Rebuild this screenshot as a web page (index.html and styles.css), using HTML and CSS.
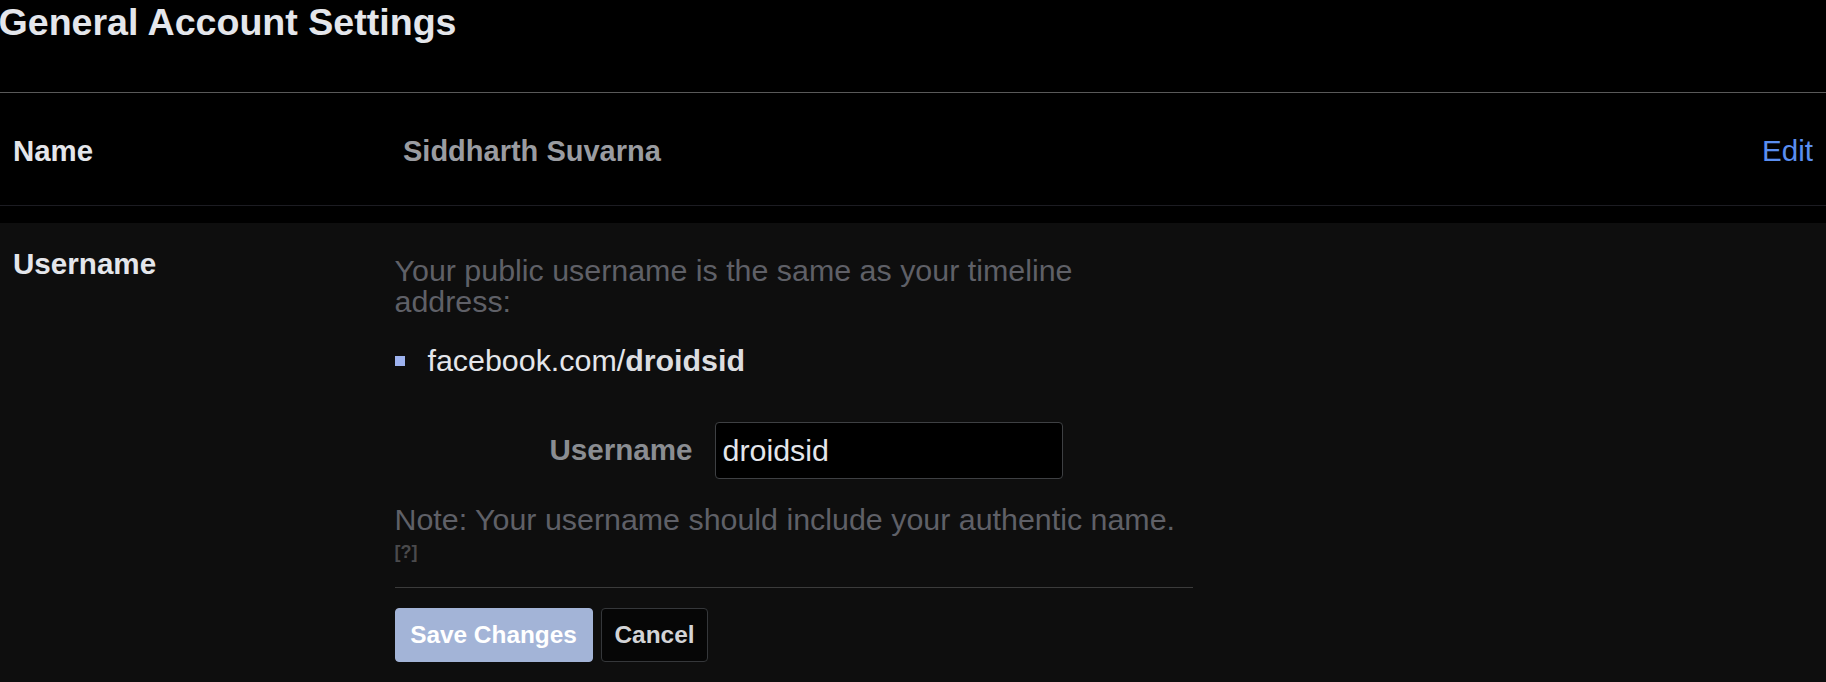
FILE: index.html
```html
<!DOCTYPE html>
<html lang="en">
<head>
<meta charset="utf-8">
<title>General Account Settings</title>
<link rel="stylesheet" href="styles.css">
</head>
<body>
  <header class="page-head">
    <h1 class="page-title">General Account Settings</h1>
  </header>

  <div class="setting-row">
    <div class="setting-label">Name</div>
    <div class="setting-value">Siddharth Suvarna</div>
    <a class="setting-edit" href="#">Edit</a>
  </div>

  <section class="setting-open">
    <div class="open-label">Username</div>
    <div class="open-body">
      <p class="desc">Your public username is the same as your timeline address:</p>
      <ul class="addr-list">
        <li class="addr-item"><span class="bullet"></span><span>facebook.com/<b>droidsid</b></span></li>
      </ul>
      <div class="field-row">
        <label class="field-label" for="uname">Username</label>
        <input id="uname" class="field-input" type="text" value="droidsid">
      </div>
      <p class="note">Note: Your username should include your authentic name.</p>
      <div class="help">[?]</div>
      <div class="actions">
        <button class="btn btn-save" type="button">Save Changes</button>
        <button class="btn btn-cancel" type="button">Cancel</button>
      </div>
    </div>
  </section>
</body>
</html>
```

FILE: styles.css
```css
html, body {
  margin: 0;
  padding: 0;
  background: #000;
}

body {
  font-family: "Liberation Sans", Arial, sans-serif;
  color: #e4e6eb;
  overflow: hidden;
}

.page-head {
  height: 92px;
  border-bottom: 1px solid #595959;
}

.page-title {
  margin: 0 0 0 -1.5px;
  font-size: 37.6px;
  line-height: 44px;
  font-weight: 700;
  color: #e4e6eb;
}

.setting-row {
  display: flex;
  align-items: flex-start;
  height: 113px;
  box-sizing: border-box;
  padding: 41px 13px 0 13px;
  border-bottom: 1px solid #1c1c22;
}

.setting-label {
  width: 390px;
  font-size: 29.4px;
  line-height: 34px;
  font-weight: 700;
  color: #e4e6eb;
}

.setting-value {
  flex: 1;
  font-size: 29px;
  line-height: 34px;
  font-weight: 700;
  color: #9a9ca1;
}

.setting-edit {
  font-size: 29.6px;
  line-height: 34px;
  color: #5a8ef0;
  text-decoration: none;
}

.setting-open {
  margin-top: 17px;
  background: #0e0e0e;
  min-height: 480px;
  display: flex;
  padding: 24px 0 0 13px;
  box-sizing: border-box;
}

.open-label {
  width: 381.5px;
  font-size: 29.6px;
  line-height: 34px;
  font-weight: 700;
  color: #e4e6eb;
}

.open-body {
  width: 798px;
  display: flex;
  flex-direction: column;
}

.desc {
  margin: 8px 0 0;
  width: 740px;
  font-size: 30.4px;
  line-height: 31px;
  color: #5f6067;
}

.addr-list {
  list-style: none;
  margin: 28px 0 0;
  padding: 0;
}

.addr-item {
  display: flex;
  align-items: center;
  gap: 23px;
  font-size: 30.4px;
  line-height: 31px;
  color: #e4e6eb;
}

.addr-item b {
  font-weight: 700;
  color: #dcdde0;
}

.bullet {
  width: 10px;
  height: 10px;
  background: #9db2ef;
  flex: none;
}

.field-row {
  display: flex;
  align-items: center;
  margin-top: 45.5px;
}

.field-label {
  width: 298px;
  text-align: right;
  font-size: 29.6px;
  line-height: 34px;
  font-weight: 700;
  color: #8a8d92;
}

.field-input {
  margin-left: 22px;
  width: 348px;
  height: 57px;
  box-sizing: border-box;
  padding: 0 0 0 7px;
  background: #000;
  border: 1px solid #3e4043;
  border-radius: 4px;
  font-family: "Liberation Sans", Arial, sans-serif;
  font-size: 30.4px;
  color: #e4e6eb;
  outline: none;
}

.note {
  margin: 25px 0 0;
  font-size: 30.4px;
  line-height: 31px;
  color: #5f6067;
}

.help {
  margin-top: 7px;
  padding-bottom: 25px;
  border-bottom: 1px solid #3b3b3b;
  font-size: 18px;
  line-height: 20px;
  font-weight: 700;
  color: #4a4a4c;
}

.actions {
  display: flex;
  gap: 8px;
  margin-top: 20px;
}

.btn {
  height: 54px;
  box-sizing: border-box;
  border-radius: 4px;
  font-family: "Liberation Sans", Arial, sans-serif;
  font-size: 24.4px;
  font-weight: 700;
  cursor: pointer;
}

.btn-save {
  width: 198px;
  padding: 0;
  background: #a3b4d7;
  border: 1px solid #a3b4d7;
  color: #ffffff;
}

.btn-cancel {
  padding: 0 13px;
  background: #060606;
  border: 1px solid #35373a;
  color: #d3d4d7;
}
```
